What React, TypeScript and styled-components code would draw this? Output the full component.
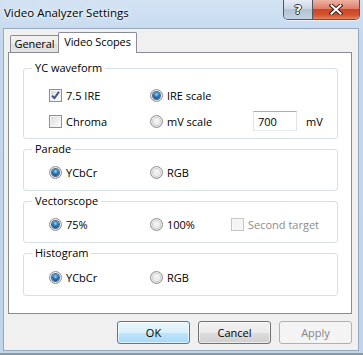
import React from "react";
import styled, { createGlobalStyle } from "styled-components";

const GlobalStyle = createGlobalStyle`
  html, body {
    margin: 0;
    padding: 0;
    background: #ffffff;
  }
  body {
    font-family: "Open Sans", "Noto Sans", sans-serif;
    font-size: 11px;
    color: #000;
  }
`;

const CheckBox = ({ checked, disabled }: { checked?: boolean; disabled?: boolean }) => (
  <Box $disabled={disabled}>
    {checked && (
      <svg width="9" height="9" viewBox="0 0 9 9">
        <path d="M1 4.6 L3.4 7.2 L8 0.8" fill="none" stroke="#3b4f86" strokeWidth="1.9" strokeLinejoin="round" />
      </svg>
    )}
  </Box>
);

const Radio = ({ checked }: { checked?: boolean }) => (
  <RadioOuter>{checked ? <Dot /> : <EmptyDot />}</RadioOuter>
);

const App = () => {
  return (
    <>
      <GlobalStyle />
      <Frame>
        <TitleBar>
          <Title>Video Analyzer Settings</Title>
          <Caption>
            <HelpButton>?</HelpButton>
            <CloseButton>
              <svg width="14" height="11" viewBox="0 0 14 11">
                <path d="M2.5 1.5 L11.5 9.5 M11.5 1.5 L2.5 9.5" stroke="#3d1f18" strokeWidth="4" strokeLinecap="square" />
                <path d="M2.5 1.5 L11.5 9.5 M11.5 1.5 L2.5 9.5" stroke="#ffffff" strokeWidth="2" strokeLinecap="square" />
              </svg>
            </CloseButton>
          </Caption>
        </TitleBar>
        <Client>
          <TabStrip>
            <Tab $w={49}>General</Tab>
            <Tab $w={79} $active>Video Scopes</Tab>
          </TabStrip>
          <Panel>
            <Group $pt={6} $pb={4}>
              <Legend>YC waveform</Legend>
              <Row>
                <Option $w={101}>
                  <CheckBox checked />
                  7.5 IRE
                </Option>
                <Option>
                  <Radio checked />
                  IRE scale
                </Option>
              </Row>
              <Row>
                <Option $w={101}>
                  <CheckBox />
                  Chroma
                </Option>
                <Option $w={103}>
                  <Radio />
                  mV scale
                </Option>
                <Input defaultValue="700" />
                <Unit>mV</Unit>
              </Row>
            </Group>

            <Group $pt={2} $pb={5}>
              <Legend>Parade</Legend>
              <Row>
                <Option $w={101}>
                  <Radio checked />
                  YCbCr
                </Option>
                <Option>
                  <Radio />
                  RGB
                </Option>
              </Row>
            </Group>

            <Group $pt={2} $pb={5}>
              <Legend>Vectorscope</Legend>
              <Row>
                <Option $w={101}>
                  <Radio checked />
                  75%
                </Option>
                <Option $w={81}>
                  <Radio />
                  100%
                </Option>
                <Option $disabled>
                  <CheckBox disabled />
                  Second target
                </Option>
              </Row>
            </Group>

            <Group $pt={3} $pb={5}>
              <Legend>Histogram</Legend>
              <Row>
                <Option $w={101}>
                  <Radio checked />
                  YCbCr
                </Option>
                <Option>
                  <Radio />
                  RGB
                </Option>
              </Row>
            </Group>
          </Panel>
          <Buttons>
            <Button $primary>OK</Button>
            <Button>Cancel</Button>
            <Button $disabled>Apply</Button>
          </Buttons>
        </Client>
      </Frame>
    </>
  );
};

export default App;

const Frame = styled.div`
  width: 363px;
  height: 355px;
  box-sizing: border-box;
  display: flex;
  flex-direction: column;
  padding: 0 4px 2px 3px;
  border-bottom: 2px solid #8e98a3;
  background: linear-gradient(180deg, #d3e3f4 0%, #c3d8ee 12%, #bfd5eb 100%);
`;

const TitleBar = styled.div`
  height: 28px;
  display: flex;
  justify-content: space-between;
  align-items: flex-start;
  flex: none;
`;

const Title = styled.div`
  margin: 5px 0 0 1px;
  font-size: 11.5px;
  line-height: 16px;
  color: #000;
  text-shadow: 0 0 6px rgba(255, 255, 255, 0.95), 0 0 3px rgba(255, 255, 255, 0.9);
`;

const Caption = styled.div`
  display: flex;
  margin-right: -1px;
  border: 1px solid #4c5866;
  border-top: none;
  border-radius: 0 0 5px 5px;
  overflow: hidden;
  box-shadow: 0 1px 0 rgba(255, 255, 255, 0.6);
`;

const HelpButton = styled.div`
  width: 28px;
  height: 19px;
  display: flex;
  align-items: center;
  justify-content: center;
  font-family: "DejaVu Sans", sans-serif;
  font-weight: bold;
  font-size: 13px;
  color: #ffffff;
  text-shadow: 0 0 1px #2d3640, 1px 0 0 #2d3640, -1px 0 0 #2d3640, 0 1px 0 #2d3640, 0 -1px 0 #2d3640;
  background: linear-gradient(180deg, #e6edf5 0%, #cbd7e4 45%, #b5c4d5 50%, #c3d2e2 100%);
  border-right: 1px solid #4c5866;
`;

const CloseButton = styled.div`
  width: 46px;
  height: 19px;
  display: flex;
  align-items: center;
  justify-content: center;
  background: linear-gradient(180deg, #eeb3a2 0%, #e07f68 45%, #cd4428 50%, #d4552f 80%, #e3855f 100%);
`;

const Client = styled.div`
  flex: 1;
  display: flex;
  flex-direction: column;
  border: 1px solid #97a8ba;
  background: #f0f0f0;
  padding: 3px 6px 0 4px;
`;

const TabStrip = styled.div`
  display: flex;
  align-items: flex-end;
  height: 20px;
  padding-left: 2px;
`;

const Tab = styled.div<{ $active?: boolean; $w: number }>`
  width: ${(p) => p.$w}px;
  box-sizing: border-box;
  height: ${(p) => (p.$active ? 21 : 17)}px;
  margin-bottom: ${(p) => (p.$active ? -1 : 0)}px;
  margin-left: ${(p) => (p.$active ? -1 : 0)}px;
  position: relative;
  z-index: ${(p) => (p.$active ? 1 : 0)};
  border: 1px solid #898c95;
  border-bottom: none;
  border-radius: 2px 2px 0 0;
  background: ${(p) => (p.$active ? "#ffffff" : "linear-gradient(180deg, #f3f3f3 0%, #ebebeb 50%, #dedede 51%, #e4e4e4 100%)")};
  text-align: center;
  letter-spacing: -0.1px;
  line-height: ${(p) => (p.$active ? 18 : 15)}px;
`;

const Panel = styled.div`
  height: 262px;
  box-sizing: border-box;
  flex: none;
  display: flex;
  flex-direction: column;
  gap: 2px;
  border: 1px solid #898c95;
  background: #ffffff;
  padding: 7px 13px 0 14px;
`;

const Group = styled.fieldset<{ $pt: number; $pb: number }>`
  margin: 0;
  min-width: 0;
  padding: ${(p) => p.$pt}px 0 ${(p) => p.$pb}px 0;
  border: 1px solid #d5dfe5;
  border-radius: 3px;
`;

const Legend = styled.legend`
  margin-left: 8px;
  padding: 0 3px;
  line-height: 16px;
  color: #000;
`;

const Row = styled.div`
  height: 26px;
  display: flex;
  align-items: center;
  padding-left: 25px;
`;

const Option = styled.div<{ $w?: number; $disabled?: boolean }>`
  display: flex;
  align-items: center;
  gap: 4px;
  width: ${(p) => (p.$w ? `${p.$w}px` : "auto")};
  flex: none;
  color: ${(p) => (p.$disabled ? "#8d8d8d" : "#000")};
  white-space: nowrap;
`;

const Box = styled.span<{ $disabled?: boolean }>`
  width: 13px;
  height: 13px;
  box-sizing: border-box;
  flex: none;
  display: flex;
  align-items: center;
  justify-content: center;
  border: 1px solid ${(p) => (p.$disabled ? "#c6c6c6" : "#8f8f8f")};
  background: ${(p) => (p.$disabled ? "#f4f4f4" : "linear-gradient(135deg, #d8d8d8 0%, #f0f0f0 60%, #ffffff 100%)")};
  box-shadow: inset 0 0 0 1px ${(p) => (p.$disabled ? "#f7f7f7" : "#f4f4f4")};
`;

const RadioOuter = styled.span`
  width: 13px;
  height: 13px;
  box-sizing: border-box;
  flex: none;
  border-radius: 50%;
  border: 1px solid #8e8f8f;
  background: radial-gradient(circle at 50% 40%, #ffffff 0%, #ececec 55%, #d2d2d2 100%);
  display: flex;
  align-items: center;
  justify-content: center;
`;

const Dot = styled.span`
  width: 7px;
  height: 7px;
  border-radius: 50%;
  background: radial-gradient(circle at 50% 35%, #9ad8f8 0%, #2b82c8 40%, #175089 70%, #1c3a5a 100%);
  box-shadow: 0 0 0 1px #51687f;
`;

const EmptyDot = styled.span`
  width: 7px;
  height: 7px;
  border-radius: 50%;
  background: radial-gradient(circle at 50% 40%, #f7f7f7 0%, #e2e2e2 100%);
  box-shadow: 0 0 0 1px #d0d0d0;
`;

const Input = styled.input`
  width: 44px;
  height: 20px;
  box-sizing: border-box;
  flex: none;
  border: 1px solid #e2e3ea;
  border-top-color: #abadb3;
  border-bottom-color: #e3e9ef;
  padding: 0 4px;
  font-family: inherit;
  font-size: 11px;
  color: #000;
  background: #ffffff;
  outline: none;
`;

const Unit = styled.span`
  margin-left: 9px;
`;

const Buttons = styled.div`
  display: flex;
  justify-content: flex-end;
  gap: 8px;
  margin-top: 7px;
`;

const Button = styled.div<{ $primary?: boolean; $disabled?: boolean }>`
  width: 73px;
  height: 23px;
  box-sizing: border-box;
  display: flex;
  align-items: center;
  justify-content: center;
  border-radius: 3px;
  border: 1px solid ${(p) => (p.$primary ? "#3c7fb1" : p.$disabled ? "#adb2b5" : "#707070")};
  color: ${(p) => (p.$disabled ? "#838383" : "#000")};
  background: ${(p) =>
    p.$primary
      ? "linear-gradient(180deg, #eaf6fd 0%, #d9f0fc 50%, #bee6fd 51%, #a7d9f5 100%)"
      : p.$disabled
      ? "#f4f4f4"
      : "linear-gradient(180deg, #f2f2f2 0%, #ebebeb 50%, #dddddd 51%, #cfcfcf 100%)"};
  box-shadow: inset 0 0 0 1px ${(p) => (p.$disabled ? "#f4f4f4" : "rgba(255, 255, 255, 0.6)")};
`;
